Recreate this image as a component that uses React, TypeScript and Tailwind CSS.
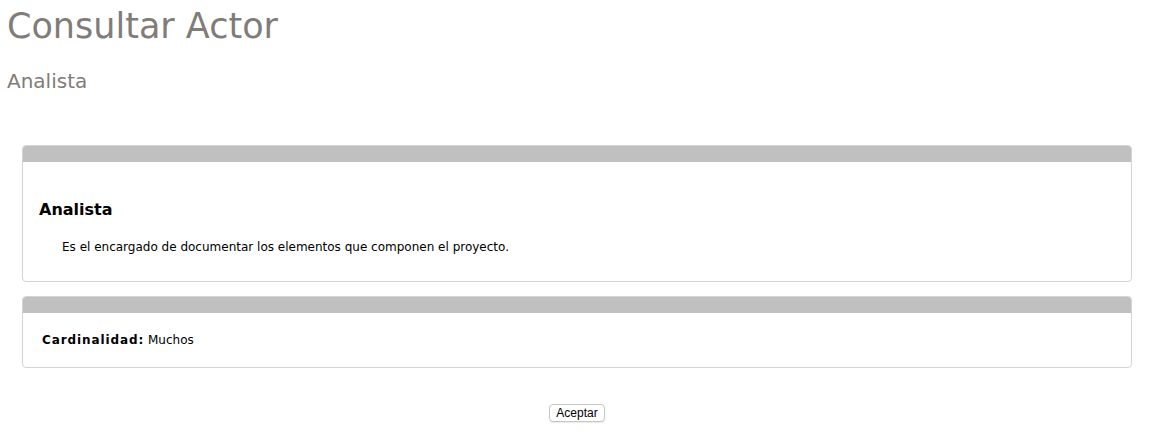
export default function App() {
  return (
    <div className="min-h-[434px] bg-white font-['DejaVu_Sans',Verdana,sans-serif]">
      <div className="px-[7px] pt-[4px]">
        <h1 className="text-[35px] leading-[44px] text-[#7f7c79]">Consultar Actor</h1>
        <h2 className="mt-[21px] text-[20px] leading-[24px] text-[#7f7c79]">Analista</h2>
      </div>

      <div className="ml-[22px] mr-[26px] mt-[52px] flex flex-col gap-[14px]">
        <section className="overflow-hidden rounded-[4px] border border-[#d4d4d4]">
          <div className="h-[16px] bg-[#c0c0c0]" />
          <div className="px-[16px] pt-[38px] pb-[26px]">
            <h3 className="text-[16px] font-bold leading-[20px] text-black">Analista</h3>
            <p className="mt-[19px] pl-[23px] text-[12px] leading-[16px] text-black">
              Es el encargado de documentar los elementos que componen el proyecto.
            </p>
          </div>
        </section>

        <section className="overflow-hidden rounded-[4px] border border-[#d4d4d4]">
          <div className="h-[16px] bg-[#c0c0c0]" />
          <div className="px-[19px] pt-[19px] pb-[19px] text-[12px] leading-[16px] text-black">
            <span className="font-bold tracking-[0.9px]">Cardinalidad:</span> Muchos
          </div>
        </section>
      </div>

      <div className="mt-[36px] flex justify-center pr-[4px]">
        <button className="h-[18px] rounded-[4px] border border-[#c6c6c6] bg-white px-[6px] text-[12px] leading-[16px] text-black shadow-[0_1px_1px_rgba(0,0,0,0.08)] font-['Liberation_Sans',Arial,sans-serif]">
          Aceptar
        </button>
      </div>
    </div>
  )
}
